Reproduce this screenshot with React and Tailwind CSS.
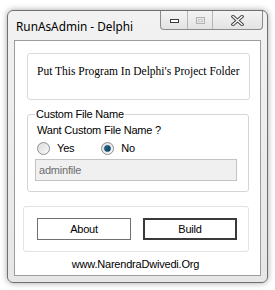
import React from "react";

const sans = { fontFamily: '"Liberation Sans", Arial, sans-serif' };

const Radio = ({ checked, label, className = "" }) => (
  <div className={`flex items-center ${className}`}>
    <span className="w-[13px] h-[13px] rounded-full border border-[#8e8f8f] bg-gradient-to-br from-[#dcdcdc] to-[#f8f8f8] flex items-center justify-center">
      {checked && (
        <span className="w-[7px] h-[7px] rounded-full bg-gradient-to-br from-[#1f6f95] to-[#0c3d5c] border border-[#0e4a6e]" />
      )}
    </span>
    <span className="ml-[7px] text-[11px] leading-[16px] tracking-[-0.2px] text-black">{label}</span>
  </div>
);

const CaptionButtons = () => (
  <div className="flex h-[19px] mr-[4px] border border-t-0 border-[#8c8c8c] rounded-b-[4px] bg-gradient-to-b from-[#f4f4f4] to-[#e3e3e3]">
    <div className="w-[27px] flex items-center justify-center border-r border-[#b5b5b5]">
      <span className="w-[9px] h-[4px] border border-[#3c3c3c] bg-white mt-[2px]" />
    </div>
    <div className="w-[25px] flex items-center justify-center border-r border-[#b5b5b5]">
      <span className="w-[9px] h-[7px] border border-[#b0b0b0] flex items-center justify-center">
        <span className="w-[5px] h-[3px] border border-[#c8c8c8]" />
      </span>
    </div>
    <div className="w-[49px] flex items-center justify-center">
      <svg width="13" height="11" viewBox="0 0 13 11">
        <path d="M2 1.5 L11 9.5 M11 1.5 L2 9.5" stroke="#4a4a4a" strokeWidth="3.4" strokeLinecap="square" />
        <path d="M2 1.5 L11 9.5 M11 1.5 L2 9.5" stroke="#ffffff" strokeWidth="1.3" strokeLinecap="square" />
      </svg>
    </div>
  </div>
);

export default function App() {
  return (
    <div className="w-[275px] h-[290px] bg-white overflow-hidden" style={sans}>
      <div className="ml-[7px] mt-[10px] w-[261px] h-[273px] rounded-[6px] border border-[#6f6f6f] bg-gradient-to-b from-[#f2f2f2] to-[#e6e6e6] shadow-[0_0_6px_rgba(0,0,0,0.35)] flex flex-col">
        <div className="h-[29px] flex items-start justify-between">
          <span
            className="ml-[8px] mt-[7px] text-[11.8px] leading-[16px] text-black"
            style={{ fontFamily: '"Noto Sans", "Open Sans", sans-serif' }}
          >
            RunAsAdmin - Delphi
          </span>
          <CaptionButtons />
        </div>
        <div className="mx-[6px] h-[236px] border border-[#9c9c9c] bg-white flex flex-col">
          <div className="ml-[12px] mt-[12px] w-[223px] h-[47px] border border-[#dadada] rounded-[3px] flex items-start pt-[10px] pl-[9px]">
            <span
              className="text-[11.5px] leading-[14px] whitespace-nowrap text-black"
              style={{ fontFamily: '"Liberation Serif", "Times New Roman", serif' }}
            >
              Put This Program In Delphi's Project Folder
            </span>
          </div>

          <fieldset className="ml-[12px] mt-[7px] w-[222px] border border-[#d5d5d5] rounded-[3px] pl-[7px] pb-[10px]">
            <legend className="px-[1px] text-[11px] leading-[14px] tracking-[-0.2px] text-black">Custom File Name</legend>
            <div className="ml-[2px] mt-[2px] text-[11px] leading-[14px] tracking-[-0.2px] text-black">Want Custom File Name ?</div>
            <div className="flex mt-[3px] ml-[2px]">
              <Radio label="Yes" />
              <Radio label="No" checked className="ml-[27px]" />
            </div>
            <div className="mt-[3px] w-[202px] h-[22px] border border-[#c3c3c3] bg-[#f0f0f0] flex items-center pl-[3px] text-[11px] tracking-[-0.2px] text-[#6d6d6d]">
              adminfile
            </div>
          </fieldset>

          <div className="ml-[8px] mt-[14px] w-[226px] h-[46px] border border-[#e3e3e3] rounded-[3px] flex items-start pt-[11px] pl-[13px] gap-[12px]">
            <button className="w-[94px] h-[22px] border border-[#707070] bg-white text-[11px] tracking-[-0.2px] text-black">About</button>
            <button className="w-[94px] h-[22px] border-2 border-[#3a3a3a] bg-white text-[11px] tracking-[-0.2px] text-black">Build</button>
          </div>

          <div className="mt-[5px] text-center text-[11px] leading-[14px] tracking-[-0.2px] text-black pr-[4px]">www.NarendraDwivedi.Org</div>
        </div>
      </div>
    </div>
  );
}
